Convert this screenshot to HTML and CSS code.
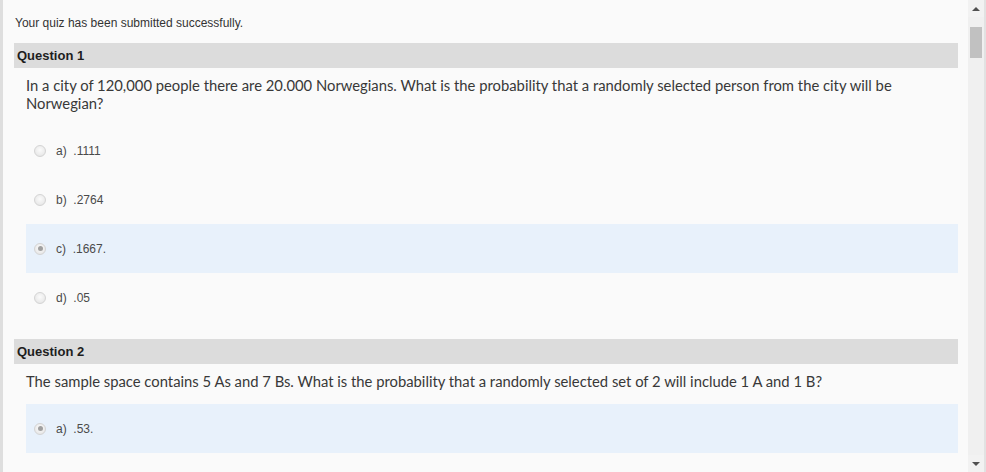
FILE: index.html
```html
<!DOCTYPE html>
<html>
<head>
<meta charset="utf-8">
<link rel="stylesheet" href="styles.css">
</head>
<body>
<div class="page">
  <main class="content">
    <p class="notice">Your quiz has been submitted successfully.</p>

    <section class="question">
      <h2 class="q-head">Question 1</h2>
      <p class="q-text">In a city of 120,000 people there are 20.000 Norwegians. What is the probability that a randomly selected person from the city will be Norwegian?</p>
      <ul class="options">
        <li class="option"><span class="radio"></span><span class="label">a)&nbsp; .1111</span></li>
        <li class="option"><span class="radio"></span><span class="label">b)&nbsp; .2764</span></li>
        <li class="option selected"><span class="radio checked"></span><span class="label">c)&nbsp; .1667.</span></li>
        <li class="option"><span class="radio"></span><span class="label">d)&nbsp; .05</span></li>
      </ul>
    </section>

    <section class="question">
      <h2 class="q-head">Question 2</h2>
      <p class="q-text">The sample space contains 5 As and 7 Bs. What is the probability that a randomly selected set of 2 will include 1 A and 1 B?</p>
      <ul class="options">
        <li class="option selected"><span class="radio checked"></span><span class="label">a)&nbsp; .53.</span></li>
      </ul>
    </section>
  </main>

  <div class="scrollbar">
    <div class="sb-btn"><span class="tri up"></span></div>
    <div class="sb-track"><div class="sb-thumb"></div></div>
    <div class="sb-btn"><span class="tri down"></span></div>
  </div>
</div>
</body>
</html>
```

FILE: styles.css
```css
* { box-sizing: border-box; }

html, body {
  margin: 0;
  padding: 0;
  background: #fafafa;
}

.page {
  display: flex;
  height: 472px;
  overflow: hidden;
}

.content {
  flex: 1;
  border-left: 3px solid #dedede;
  padding: 15px 10px 0 11px;
  overflow: hidden;
}

.notice {
  margin: 0 0 11px 1px;
  font-family: "Liberation Sans", Arial, sans-serif;
  font-size: 12px;
  line-height: 17px;
  color: #333;
}

.question {
  margin-bottom: 17px;
}

.q-head {
  margin: 0;
  height: 25px;
  padding: 0 3px;
  background: #dcdcdc;
  font-family: "Liberation Sans", Arial, sans-serif;
  font-size: 13px;
  font-weight: bold;
  line-height: 25px;
  color: #1e1e1e;
}

.q-text {
  margin: 0;
  padding: 8px 60px 0 12px;
  font-family: Lato, "Open Sans", sans-serif;
  font-size: 14.8px;
  line-height: 18px;
  color: #383838;
}

.options {
  list-style: none;
  margin: 14px 0 0 12px;
  padding: 0;
}

.option {
  display: flex;
  align-items: center;
  gap: 10px;
  height: 49px;
  padding-left: 8px;
}

.option.selected {
  background: #e8f1fb;
}

.radio {
  position: relative;
  width: 12px;
  height: 12px;
  border-radius: 50%;
  border: 1px solid #d4d4d4;
  background: radial-gradient(circle at 50% 40%, #fbfbfb 0%, #ececec 60%, #dedede 100%);
  flex: none;
}

.radio.checked::after {
  content: "";
  position: absolute;
  left: 2.5px;
  top: 2.5px;
  width: 5px;
  height: 5px;
  border-radius: 50%;
  background: #a0a0a0;
}

.label {
  font-family: "Liberation Sans", Arial, sans-serif;
  font-size: 12px;
  color: #4a4a4a;
}

.scrollbar {
  width: 18px;
  flex: none;
  display: flex;
  flex-direction: column;
  background: #f0f0f0;
  border-right: 2px solid #e2e2e2;
}

.sb-btn {
  height: 17px;
  display: flex;
  align-items: center;
  justify-content: center;
  background: #f2f2f2;
}

.sb-track {
  flex: 1;
  padding: 10px 2px 0 2px;
}

.sb-thumb {
  height: 31px;
  background: #c1c1c1;
}

.tri {
  width: 0;
  height: 0;
  border-left: 4px solid transparent;
  border-right: 4px solid transparent;
}

.tri.up { border-bottom: 4px solid #505050; }
.tri.down { border-top: 4px solid #505050; }
```
